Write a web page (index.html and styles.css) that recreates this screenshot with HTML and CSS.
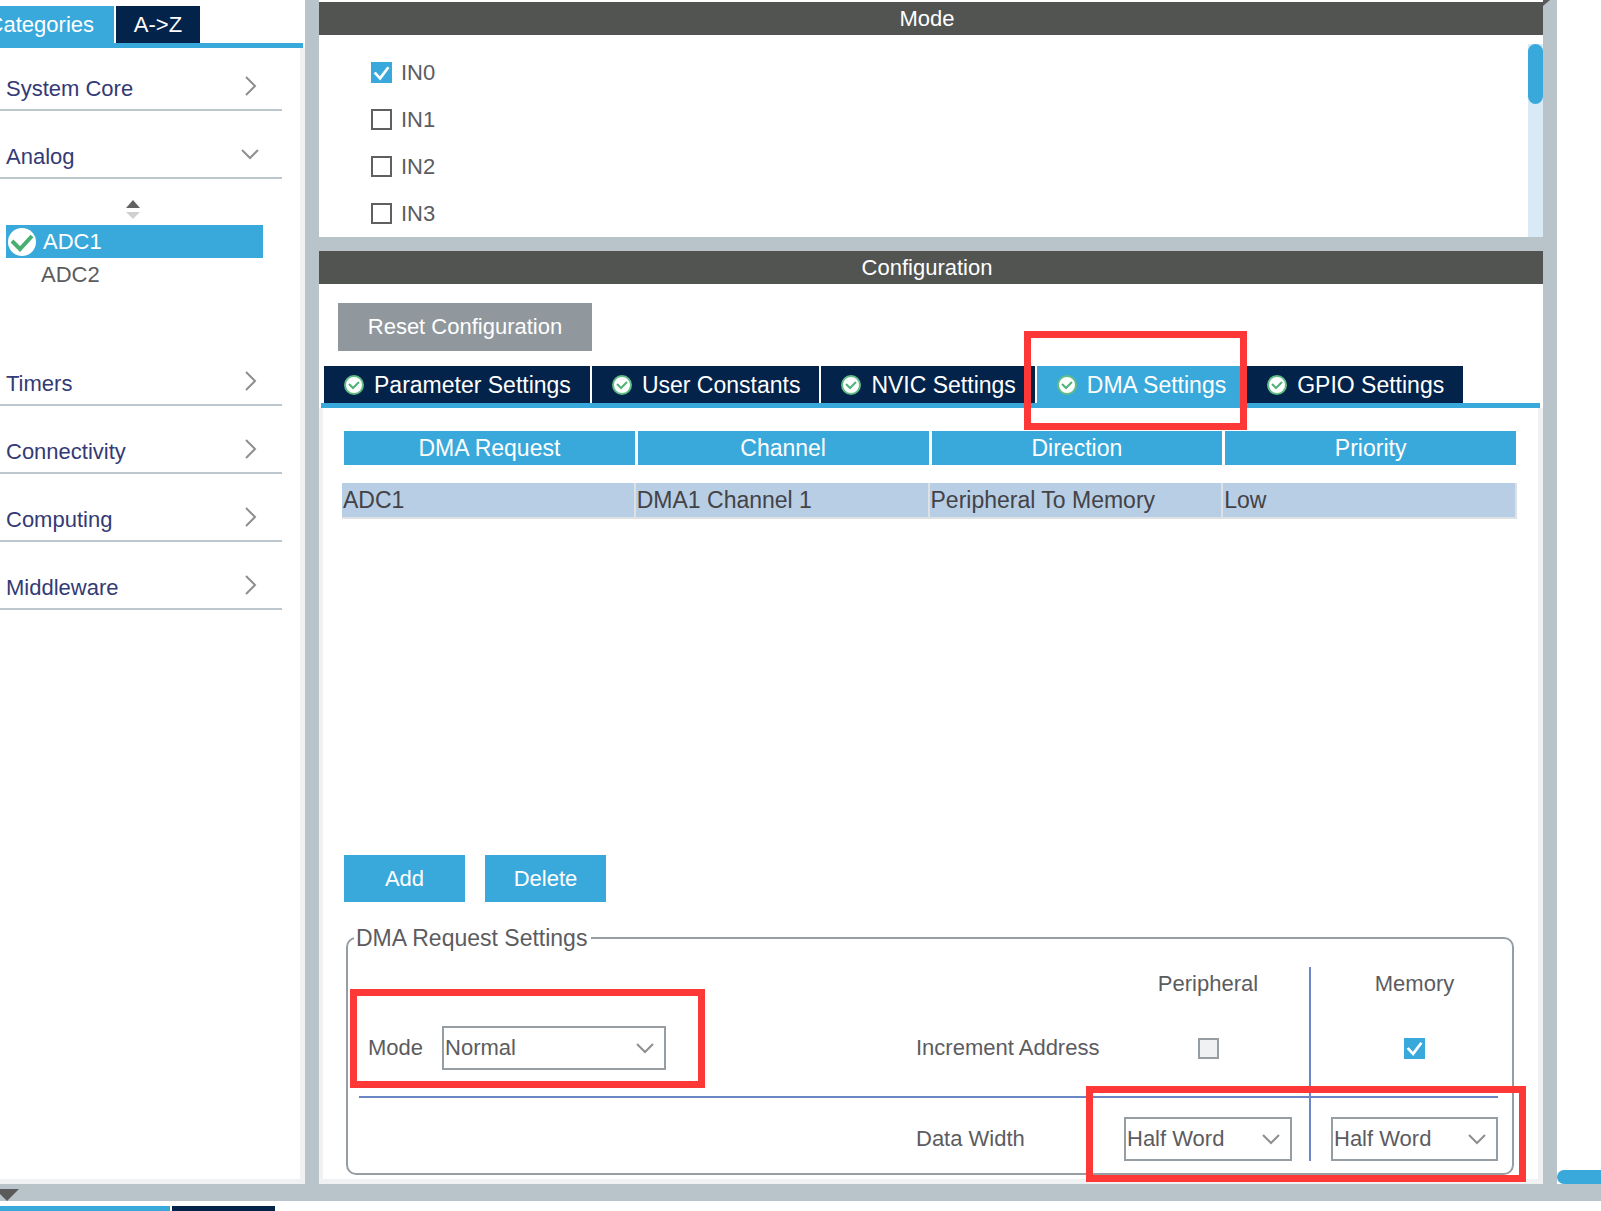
FILE: index.html
```html
<!DOCTYPE html>
<html lang="en">
<head>
<meta charset="utf-8">
<title>ADC1 Mode and Configuration</title>
<link rel="stylesheet" href="styles.css">
</head>
<body>
<svg class="defs" aria-hidden="true">
  <symbol id="right" viewBox="0 0 20 20"><path d="M6 1 L15 10 L6 19" fill="none" stroke="#8f8f8f" stroke-width="2"/></symbol>
  <symbol id="down" viewBox="0 0 20 20"><path d="M2 6 L10 14 L18 6" fill="none" stroke="#8f8f8f" stroke-width="2"/></symbol>
  <symbol id="ok" viewBox="0 0 20 20"><circle cx="10" cy="10" r="9" fill="#fff" stroke="#62bd85" stroke-width="2"/><path d="M5 9 L9 13 L15 7" fill="none" stroke="#4fb377" stroke-width="2"/></symbol>
</svg>
<div class="app">
  <div class="workspace">
    <aside class="sidebar">
      <div class="side-tabs">
        <button class="side-tab side-tab-active">Categories</button>
        <button class="side-tab side-tab-sort">A-&gt;Z</button>
      </div>
      <nav class="nav">
        <a class="nav-item" href="#system">System Core<svg class="icon"><use href="#right"/></svg></a>
        <a class="nav-item" href="#analog">Analog<svg class="icon"><use href="#down"/></svg></a>
        <div class="sublist">
          <svg class="sorter" viewBox="0 0 14 20"><path d="M0 8 L7 0 L14 8Z" fill="#636363"/><path d="M0 12 L14 12 L7 19Z" fill="#d0d0d0"/></svg>
          <a class="sub-item sub-item-active" href="#adc1"><svg class="badge" viewBox="0 0 28 28"><circle cx="14" cy="14" r="14" fill="#fff"/><path d="M4 13 L12 21 L24 8" fill="none" stroke="#47b070" stroke-width="4"/></svg>ADC1</a>
          <a class="sub-item" href="#adc2">ADC2</a>
        </div>
        <a class="nav-item" href="#timers">Timers<svg class="icon"><use href="#right"/></svg></a>
        <a class="nav-item" href="#connectivity">Connectivity<svg class="icon"><use href="#right"/></svg></a>
        <a class="nav-item" href="#computing">Computing<svg class="icon"><use href="#right"/></svg></a>
        <a class="nav-item" href="#middleware">Middleware<svg class="icon"><use href="#right"/></svg></a>
      </nav>
    </aside>
    <div class="splitter"></div>
    <main class="center">
      <section class="mode">
        <h2 class="title">Mode</h2>
        <div class="mode-body">
          <div class="inputs">
            <label class="input-row"><input class="check" type="checkbox" checked>IN0</label>
            <label class="input-row"><input class="check" type="checkbox">IN1</label>
            <label class="input-row"><input class="check" type="checkbox">IN2</label>
            <label class="input-row"><input class="check" type="checkbox">IN3</label>
          </div>
          <div class="scroll"><div class="thumb"></div></div>
        </div>
      </section>
      <section class="config">
        <h2 class="title">Configuration</h2>
        <button class="reset">Reset Configuration</button>
        <div class="tabs">
          <button class="tab"><svg class="icon"><use href="#ok"/></svg>Parameter Settings</button>
          <button class="tab"><svg class="icon"><use href="#ok"/></svg>User Constants</button>
          <button class="tab"><svg class="icon"><use href="#ok"/></svg>NVIC Settings</button>
          <button class="tab tab-active"><svg class="icon"><use href="#ok"/></svg>DMA Settings<span class="mark mark-tab"></span></button>
          <button class="tab"><svg class="icon"><use href="#ok"/></svg>GPIO Settings</button>
        </div>
        <div class="pane">
          <div class="requests">
            <table class="dma">
              <thead><tr><th>DMA Request</th><th>Channel</th><th>Direction</th><th>Priority</th></tr></thead>
              <tbody><tr><td>ADC1</td><td>DMA1 Channel 1</td><td>Peripheral To Memory</td><td>Low</td></tr></tbody>
            </table>
          </div>
          <div class="actions">
            <button class="action">Add</button>
            <button class="action">Delete</button>
          </div>
          <fieldset class="settings">
            <legend>DMA Request Settings</legend>
            <div class="grid">
              <div class="head peripheral">Peripheral</div>
              <div class="head memory">Memory</div>
              <div class="ruled mode-cell">
                <label for="mode">Mode</label>
                <span class="select select-wide"><select id="mode"><option>Normal</option></select><svg class="icon"><use href="#down"/></svg></span>
                <span class="mark mark-mode"></span>
              </div>
              <div class="ruled name">Increment Address</div>
              <div class="ruled peripheral"><input class="check" type="checkbox" disabled aria-label="Peripheral"></div>
              <div class="ruled memory"><input class="check" type="checkbox" checked aria-label="Memory"></div>
              <div class="name width-name">Data Width</div>
              <div class="width-cell peripheral">
                <span class="select"><select aria-label="Peripheral"><option>Half Word</option></select><svg class="icon"><use href="#down"/></svg></span>
                <span class="mark mark-width"></span>
              </div>
              <div class="width-cell memory">
                <span class="select"><select aria-label="Memory"><option>Half Word</option></select><svg class="icon"><use href="#down"/></svg></span>
              </div>
            </div>
          </fieldset>
        </div>
      </section>
    </main>
    <div class="splitter"><svg class="corner" viewBox="0 0 7 6"><path d="M0 0 H7 L0 6Z" fill="#5a5a5a"/></svg></div>
    <div class="view"><div class="view-scroll"></div></div>
  </div>
  <div class="bottom-splitter"><svg class="collapse" viewBox="0 0 19 12"><path d="M0 0 H19 L7 12 L0 5Z" fill="#5a5a5a"/></svg></div>
  <div class="bottom-tabs"><div class="bottom-tab bottom-tab-active"></div><div class="bottom-tab"></div></div>
</div>
</body>
</html>
```
FILE: styles.css
```css
:root {
  --blue: #39a9dc;
  --navy: #03234b;
  --split: #b8c4ca;
  --edge: #eff1f3;
  --text: #5c5c60;
  --rule: #6a86c4;
  --border: #969ea4;
}
* { box-sizing: border-box; }
body {
  margin: 0;
  background: #fff;
  color: var(--text);
  font: 22px/26px "Liberation Sans", Arial, sans-serif;
}
button, select { font: inherit; border: 0; border-radius: 0; padding: 0; }
a { color: inherit; text-decoration: none; }
.defs { display: none; }
.icon { width: 20px; height: 20px; flex: none; }

.app { display: flex; flex-direction: column; height: 100vh; overflow: hidden; }
.workspace { display: flex; flex: 1; min-height: 0; }
.splitter { width: 14px; flex: none; background: var(--split); }
.corner { display: block; width: 7px; height: 6px; }

/* Category sidebar */
.sidebar {
  width: 305px;
  flex: none;
  display: flex;
  flex-direction: column;
}
.side-tabs {
  display: flex;
  gap: 2px;
  height: 48px;
  padding-top: 6px;
  margin-right: 2px;
  border-bottom: 5px solid var(--blue);
}
.side-tab { display: flex; justify-content: center; align-items: center; overflow: hidden; color: #fff; background: var(--navy); }
.side-tab-active { width: 114px; justify-content: flex-end; padding-right: 20px; background: var(--blue); }
.side-tab-sort { width: 84px; }
.nav {
  flex: 1;
  display: flex;
  flex-direction: column;
  gap: 6px;
  padding-top: 1px;
  border-right: 5px solid var(--edge);
  border-bottom: 5px solid var(--edge);
}
.nav-item {
  display: flex;
  justify-content: space-between;
  height: 62px;
  margin-right: 18px;
  padding: 27px 22px 0 6px;
  border-bottom: 2px solid #bcc7cd;
  color: #343a75;
}
.sublist { height: 153px; padding: 15px 37px 0 6px; }
.sorter { display: block; width: 14px; height: 20px; margin: 0 0 5px 120px; }
.sub-item { display: flex; align-items: center; height: 33px; padding-left: 35px; }
.sub-item-active { gap: 7px; padding-left: 2px; background: var(--blue); color: #fff; }
.badge { width: 28px; height: 28px; }

/* Mode panel */
.center { flex: 1; min-width: 0; display: flex; flex-direction: column; padding-top: 2px; }
.title {
  margin: 0;
  height: 33px;
  padding-right: 8px;
  background: #525452;
  color: #fff;
  font-size: 22px;
  font-weight: normal;
  line-height: 33px;
  text-align: center;
}
.mode { border-bottom: 14px solid var(--split); }
.mode-body { display: flex; justify-content: space-between; height: 202px; padding-top: 9px; }
.inputs { padding: 5px 0 0 52px; }
.input-row { display: flex; align-items: center; gap: 9px; height: 47px; }
.scroll { width: 15px; background: #d9e9f6; }
.thumb { height: 60px; border-radius: 8px; background: var(--blue); }
.check {
  appearance: none;
  width: 21px;
  height: 21px;
  flex: none;
  margin: 0;
  border: 2px solid #606060;
  background: #fff;
}
.check:disabled { border-color: var(--border); background: var(--edge); }
.check:checked { border: 0; background: var(--blue); }
.check:checked::before {
  content: "";
  display: block;
  height: 21px;
  background: #fff;
  clip-path: polygon(12% 53%, 23% 46%, 42% 68%, 78% 22%, 88% 29%, 44% 88%);
}

/* Configuration panel */
.config { flex: 1; display: flex; flex-direction: column; min-height: 0; }
.reset {
  align-self: flex-start;
  width: 254px;
  height: 48px;
  flex: none;
  margin: 19px 0 15px 19px;
  background: #90989e;
  color: #fff;
}
.tabs {
  display: flex;
  gap: 2px;
  height: 42px;
  flex: none;
  margin: 0 3px 0 2px;
  padding-left: 3px;
  border-bottom: 5px solid var(--blue);
}
.tab {
  position: relative;
  display: flex;
  align-items: center;
  gap: 10px;
  padding: 0 19px 0 20px;
  background: var(--navy);
  color: #fff;
  font-size: 23px;
  white-space: nowrap;
}
.tab-active { background: var(--blue); }
.pane {
  flex: 1;
  display: flex;
  flex-direction: column;
  padding: 23px 21px 4px 19px;
  border: solid var(--edge);
  border-width: 0 5px 5px 4px;
}
.requests { flex: 1; }
.dma { width: 100%; table-layout: fixed; border-spacing: 0; font-size: 23px; line-height: 34px; }
.dma th { padding: 0; border: solid #fff; border-width: 0 1px 0 2px; background: var(--blue); color: #fff; font-weight: normal; }
.dma tbody::before { content: ""; display: block; height: 18px; }
.dma td { padding: 0 0 0 1px; border: solid #dde1e4; border-width: 0 2px 2px 0; background: #b8cee5; color: #434347; }
.actions { display: flex; gap: 20px; padding-left: 2px; margin-bottom: 24px; }
.action { width: 121px; height: 47px; background: var(--blue); color: #fff; }

/* DMA request settings */
.settings {
  min-width: 0;
  margin: 0 3px 0 4px;
  padding: 17px 14px 12px 11px;
  border: 2px solid var(--border);
  border-radius: 10px;
}
.settings legend { margin-left: -5px; padding: 0 4px 0 2px; font-size: 23px; line-height: 24px; }
.grid {
  display: grid;
  grid-template-columns: 1fr 208px 185px 189px;
  grid-template-rows: 33px 98px 63px;
}
.grid > div { display: flex; align-items: center; justify-content: center; }
.grid > .name { justify-content: flex-start; }
.grid > .peripheral { grid-column: 3; padding-right: 17px; }
.grid > .memory { grid-column: 4; padding-left: 20px; border-left: 2px solid var(--rule); }
.ruled { border-bottom: 2px solid var(--rule); }
.grid > .mode-cell { position: relative; justify-content: flex-start; gap: 19px; padding-left: 9px; }
.grid > .width-name { grid-column: 2; padding-top: 19px; }
.grid > .width-cell { position: relative; align-items: flex-end; }
.select { display: grid; align-items: center; width: 168px; height: 44px; border: 2px solid var(--border); }
.select-wide { width: 224px; }
.select select { grid-area: 1 / 1; width: 100%; height: 40px; padding-left: 1px; appearance: none; background: none; color: inherit; }
.select .icon { grid-area: 1 / 1; justify-self: end; margin-right: 9px; pointer-events: none; }

/* Highlight frames over the controls */
.mark { position: absolute; border: 7px solid #fd3836; pointer-events: none; z-index: 1; }
.mark-tab { left: -13px; top: -35px; width: 223px; height: 99px; }
.mark-mode { left: -9px; top: -11px; width: 355px; height: 99px; }
.mark-width { left: -38px; top: -12px; width: 440px; height: 96px; }

/* Right view and bottom bar */
.view { width: 44px; flex: none; display: flex; align-items: flex-end; }
.view-scroll { width: 100%; height: 14px; border-radius: 7px 0 0 7px; background: var(--blue); }
.bottom-splitter { height: 17px; flex: none; padding-top: 5px; background: var(--split); }
.collapse { display: block; width: 19px; height: 12px; }
.bottom-tabs { display: flex; gap: 2px; height: 10px; flex: none; padding-top: 5px; }
.bottom-tab { width: 103px; background: var(--navy); }
.bottom-tab-active { width: 170px; background: var(--blue); }
```
